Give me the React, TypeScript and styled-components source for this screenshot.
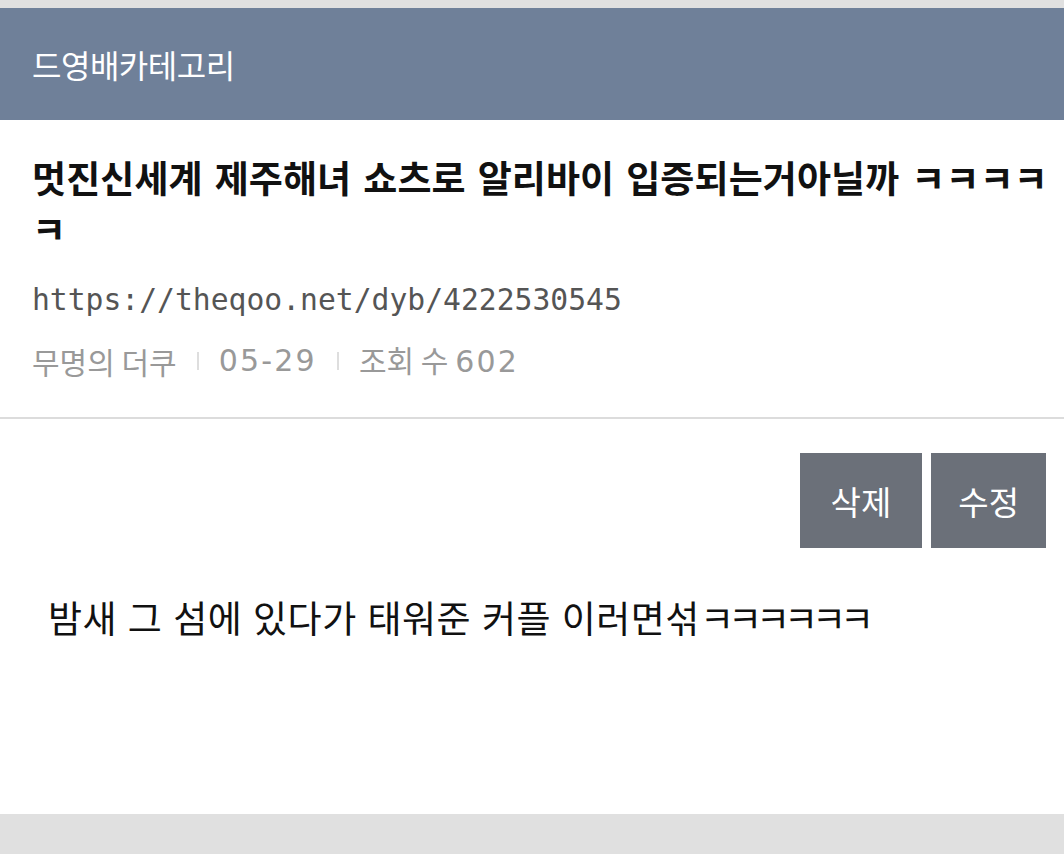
import React from "react";
import styled, { createGlobalStyle } from "styled-components";

const GlobalStyle = createGlobalStyle`
  html, body { margin: 0; padding: 0; background: #e0e0e0; }
  body { font-family: "Noto Sans CJK KR", "Noto Sans", sans-serif; }
  * { box-sizing: border-box; }
`;

const Page = styled.div`
  display: flex;
  flex-direction: column;
  min-height: 100vh;
  padding-top: 8px;
`;

const CategoryBar = styled.header`
  height: 112px;
  background: #6f8099;
  display: flex;
  align-items: center;
  padding-left: 32px;
  color: #fff;
  font-size: 32px;
  letter-spacing: -0.5px;
`;

const Sheet = styled.main`
  flex: 1;
  background: #fff;
  display: flex;
  flex-direction: column;
`;

const ArticleHead = styled.section`
  padding: 32px 6px 34px 32px;
  border-bottom: 2px solid #dcdcdc;
`;

const Title = styled.h1`
  margin: 0;
  font-size: 37px;
  line-height: 51px;
  font-weight: 700;
  color: #111;
  letter-spacing: 0.1px;
  word-spacing: 3.5px;
`;

const Laugh = styled.span`
  letter-spacing: -6px;
`;

const Url = styled.div`
  margin-top: 24px;
  font-family: "DejaVu Sans Mono", monospace;
  font-size: 29.7px;
  line-height: 44px;
  color: #555;
`;

const Meta = styled.div`
  margin-top: 16px;
  display: flex;
  align-items: center;
  font-size: 30px;
  line-height: 42px;
  color: #999;
`;

const MetaNum = styled.span`
  font-family: "DejaVu Sans", sans-serif;
  letter-spacing: 2.2px;
`;

const Sep = styled.span`
  display: inline-block;
  width: 2px;
  height: 18px;
  background: #dedede;
  margin: 0 20px;
`;

const Actions = styled.div`
  display: flex;
  justify-content: flex-end;
  gap: 9px;
  padding: 34px 18px 0 0;
`;

const ActionButton = styled.button<{ $wide?: boolean }>`
  height: 95px;
  padding: 0 ${(p) => (p.$wide ? "31px" : "27px")};
  border: none;
  background: #6b7079;
  color: #fff;
  font-family: "Noto Sans CJK KR", sans-serif;
  font-size: 33px;
  cursor: pointer;
`;

const Body = styled.div`
  padding: 44px 32px 0 48px;
  font-size: 37px;
  line-height: 50px;
  color: #111;
  letter-spacing: 0.5px;
  word-spacing: 2px;
`;

const Footer = styled.div`
  height: 40px;
  background: #e0e0e0;
`;

export default function App() {
  return (
    <>
      <GlobalStyle />
      <Page>
        <CategoryBar>드영배카테고리</CategoryBar>
        <Sheet>
          <ArticleHead>
            <Title>멋진신세계 제주해녀 쇼츠로 알리바이 입증되는거아닐까 ㅋㅋㅋㅋㅋ</Title>
            <Url>https://theqoo.net/dyb/4222530545</Url>
            <Meta>
              <span>무명의 더쿠</span>
              <Sep />
              <MetaNum>05-29</MetaNum>
              <Sep />
              <span>
                조회 수 <MetaNum>602</MetaNum>
              </span>
            </Meta>
          </ArticleHead>
          <Actions>
            <ActionButton $wide>삭제</ActionButton>
            <ActionButton>수정</ActionButton>
          </Actions>
          <Body>
            밤새 그 섬에 있다가 태워준 커플 이러면섞<Laugh>ㅋㅋㅋㅋㅋㅋ</Laugh>
          </Body>
        </Sheet>
        <Footer />
      </Page>
    </>
  );
}
